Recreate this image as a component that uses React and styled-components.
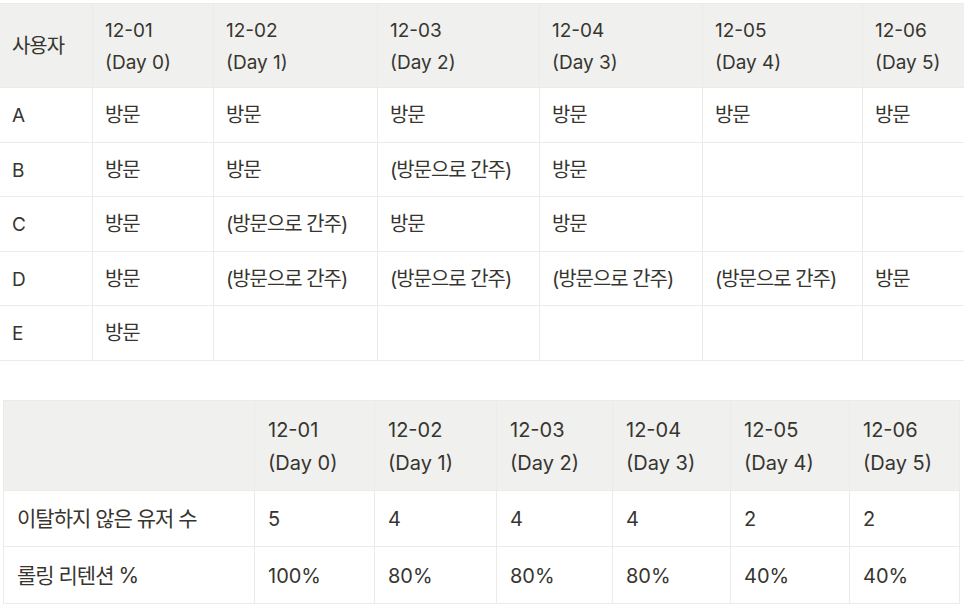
import React from "react";
import styled, { createGlobalStyle } from "styled-components";

const Global = createGlobalStyle`
  html, body {
    margin: 0;
    padding: 0;
    background: #ffffff;
    overflow: hidden;
  }
  body {
    font-family: "Inter", "Noto Sans CJK KR", sans-serif;
    color: #37352f;
    -webkit-font-smoothing: antialiased;
  }
`;

const Page = styled.div`
  width: 964px;
  height: 610px;
  display: flex;
  flex-direction: column;
  overflow: hidden;
`;

const Scroller = styled.div`
  overflow: hidden;
  padding-top: ${(p) => p.$top}px;
  padding-left: ${(p) => p.$left}px;
  margin-left: ${(p) => p.$shift || 0}px;
`;

const Table = styled.table`
  border-collapse: collapse;
  table-layout: fixed;
  width: ${(p) => p.$width}px;
  font-size: ${(p) => p.$size}px;
  line-height: ${(p) => p.$lh}px;
`;

const HeadCell = styled.th`
  background: #f0f0ee;
  border: 1px solid #ebebe9;
  text-align: left;
  font-weight: 400;
  vertical-align: middle;
  padding: ${(p) => p.$pad};
  font-size: ${(p) => (p.$ko ? "1.05em" : "1em")};
  letter-spacing: ${(p) => (p.$ko ? "-1px" : "0")};
  white-space: pre-line;
  overflow: hidden;
`;

const Cell = styled.td`
  border: 1px solid #ebebe9;
  vertical-align: top;
  padding: ${(p) => p.$pad};
  font-size: ${(p) => (p.$ko ? "1.05em" : "1em")};
  letter-spacing: ${(p) => (p.$ko ? "-1px" : "0")};
  white-space: nowrap;
  overflow: hidden;
`;

const Gap = styled.div`
  height: ${(p) => p.$h}px;
  flex: none;
`;

const isKo = (s) => /[\uac00-\ud7a3]/.test(s);

const days = [0, 1, 2, 3, 4, 5].map((d) => `12-0${d + 1}\n(Day ${d})`);

const V = "방문";
const C = "(방문으로 간주)";

const visits = [
  ["A", V, V, V, V, V, V],
  ["B", V, V, C, V, "", ""],
  ["C", V, C, V, V, "", ""],
  ["D", V, C, C, C, C, V],
  ["E", V, "", "", "", "", ""],
];

const retention = [
  ["이탈하지 않은 유저 수", "5", "4", "4", "4", "2", "2"],
  ["롤링 리텐션 %", "100%", "80%", "80%", "80%", "40%", "40%"],
];

function DataTable({ cols, head, rows, size, lh, headPad, bodyPad }) {
  const width = cols.reduce((a, b) => a + b, 0);
  return (
    <Table $width={width} $size={size} $lh={lh}>
      <colgroup>
        {cols.map((w, i) => (
          <col key={i} style={{ width: w }} />
        ))}
      </colgroup>
      <thead>
        <tr>
          {head.map((h, i) => (
            <HeadCell key={i} $pad={headPad} $ko={isKo(h)}>
              {h}
            </HeadCell>
          ))}
        </tr>
      </thead>
      <tbody>
        {rows.map((r, ri) => (
          <tr key={ri}>
            {r.map((c, ci) => (
              <Cell key={ci} $pad={bodyPad} $ko={isKo(c)}>
                {c || "\u00a0"}
              </Cell>
            ))}
          </tr>
        ))}
      </tbody>
    </Table>
  );
}

export default function App() {
  return (
    <Page>
      <Global />
      <Scroller $top={3} $left={0} $shift={-1}>
        <DataTable
          cols={[93, 121, 164, 162, 163, 160, 160]}
          head={["사용자", ...days]}
          rows={visits}
          size={19}
          lh={31.5}
          headPad="11px 12px 9px"
          bodyPad="12px 12px 10px"
        />
      </Scroller>
      <Gap $h={39} />
      <Scroller $top={0} $left={3}>
        <DataTable
          cols={[251, 120, 122, 116, 118, 119, 110]}
          head={["", ...days]}
          rows={retention}
          size={20}
          lh={32.5}
          headPad="13.5px 13px 10.5px"
          bodyPad="12.5px 13px 10.5px"
        />
      </Scroller>
    </Page>
  );
}
